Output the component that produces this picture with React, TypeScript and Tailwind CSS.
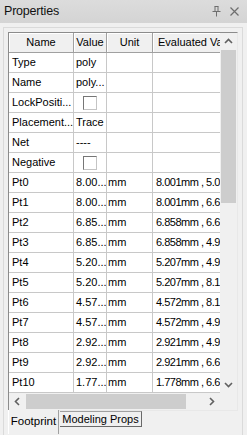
import React from "react";

type Row = { name: string; value?: string; unit?: string; evald?: string; check?: boolean };

const rows: Row[] = [
    { name: "Type", value: "poly" },
    { name: "Name", value: "poly..." },
    { name: "LockPositi...", check: true },
    { name: "Placement...", value: "Trace" },
    { name: "Net", value: "----" },
    { name: "Negative", check: true },
    { name: "Pt0", value: "8.00...", unit: "mm", evald: "8.001mm , 5.0" },
    { name: "Pt1", value: "8.00...", unit: "mm", evald: "8.001mm , 6.6" },
    { name: "Pt2", value: "6.85...", unit: "mm", evald: "6.858mm , 6.6" },
    { name: "Pt3", value: "6.85...", unit: "mm", evald: "6.858mm , 4.9" },
    { name: "Pt4", value: "5.20...", unit: "mm", evald: "5.207mm , 4.9" },
    { name: "Pt5", value: "5.20...", unit: "mm", evald: "5.207mm , 8.1" },
    { name: "Pt6", value: "4.57...", unit: "mm", evald: "4.572mm , 8.1" },
    { name: "Pt7", value: "4.57...", unit: "mm", evald: "4.572mm , 4.9" },
    { name: "Pt8", value: "2.92...", unit: "mm", evald: "2.921mm , 4.9" },
    { name: "Pt9", value: "2.92...", unit: "mm", evald: "2.921mm , 6.6" },
    { name: "Pt10", value: "1.77...", unit: "mm", evald: "1.778mm , 6.6" },
];

function Chevron({ dir }: { dir: "up" | "down" | "left" | "right" }) {
    const pts = {
        up: "1,6 4.5,2.5 8,6",
        down: "1,3 4.5,6.5 8,3",
        left: "6,1 2.5,4.5 6,8",
        right: "3,1 6.5,4.5 3,8",
    }[dir];
    return (
        <svg width="9" height="9" viewBox="0 0 9 9">
            <polyline points={pts} fill="none" stroke="#606060" strokeWidth="1.6" />
        </svg>
    );
}

function HeaderCell({ label, className }: { label: string; className: string }) {
    return (
        <div
            className={`${className} h-[20px] flex items-center justify-center bg-[#f0f0f0] border-r border-b border-[#a0a0a0] shadow-[inset_1px_1px_0_#ffffff] overflow-hidden whitespace-nowrap`}
        >
            {label}
        </div>
    );
}

export default function App() {
    return (
        <div
            className="w-[247px] h-[435px] bg-[#f0f0f0] flex flex-col overflow-hidden text-[11px] text-black"
            style={{ fontFamily: '"Liberation Sans", Arial, sans-serif' }}
        >
            {/* Title bar */}
            <div className="h-[23px] shrink-0 bg-gradient-to-b from-[#dcdcdc] to-[#d4d4d4] flex items-center pl-[4px] pr-[8px]">
                <span className="text-[12.5px] text-[#111111] tracking-[-0.2px]">Properties</span>
                <div className="ml-auto flex items-center gap-[9px]">
                    <svg width="9" height="11" viewBox="0 0 9 11">
                        <path d="M2.5 0.5h4M3 0.5v5M6 0.5v5M0.5 5.5h8M4.5 5.5v5" fill="none" stroke="#6e6e6e" strokeWidth="1" />
                    </svg>
                    <svg width="9" height="9" viewBox="0 0 9 9">
                        <path d="M0.5 0.5l8 8M8.5 0.5l-8 8" fill="none" stroke="#6e6e6e" strokeWidth="1.2" />
                    </svg>
                </div>
            </div>

            {/* Panel body */}
            <div className="flex-1 flex flex-col mt-[4px] ml-[3px] mr-[4px] border-l border-t border-r border-[#dadada] pt-[4px] pl-[4px]">
                <div className="w-[230px] border border-[#8c8c8c] border-r-[#e8e8e8] border-b-[#e8e8e8] flex flex-col bg-white">
                    <div className="flex">
                        <div className="w-[211px] flex flex-col">
                            <div className="flex">
                                <HeaderCell label="Name" className="w-[65px]" />
                                <HeaderCell label="Value" className="w-[33px]" />
                                <HeaderCell label="Unit" className="w-[46px]" />
                                <div className="flex-1 h-[20px] flex items-center pl-[5px] bg-[#f0f0f0] border-b border-[#a0a0a0] shadow-[inset_1px_1px_0_#ffffff] overflow-hidden whitespace-nowrap">
                                    Evaluated Value
                                </div>
                            </div>
                            {rows.map((r) => (
                                <div key={r.name} className="flex h-[20px] border-b border-[#c8c8c8]">
                                    <div className="w-[65px] border-r border-[#c8c8c8] pl-[3px] flex items-center whitespace-nowrap overflow-hidden">
                                        {r.name}
                                    </div>
                                    <div className="w-[33px] border-r border-[#c8c8c8] pl-[2px] flex items-center whitespace-nowrap overflow-hidden">
                                        {r.check ? (
                                            <div className="ml-[7px] w-[14px] h-[14px] bg-white border border-[#767676] border-r-[#c4c4c4] border-b-[#c4c4c4]" />
                                        ) : (
                                            r.value
                                        )}
                                    </div>
                                    <div className="w-[46px] border-r border-[#c8c8c8] pl-[1px] flex items-center whitespace-nowrap overflow-hidden">
                                        {r.unit}
                                    </div>
                                    <div className="flex-1 pl-[3px] flex items-center whitespace-nowrap overflow-hidden tracking-[-0.5px]">
                                        {r.evald}
                                    </div>
                                </div>
                            ))}
                        </div>
                        {/* Vertical scrollbar */}
                        <div className="w-[17px] bg-[#f0f0f0] flex flex-col">
                            <div className="h-[17px] flex items-center justify-center">
                                <Chevron dir="up" />
                            </div>
                            <div className="flex-1 px-[1px]">
                                <div className="h-[153px] bg-[#cdcdcd]" />
                            </div>
                            <div className="h-[17px] flex items-center justify-center">
                                <Chevron dir="down" />
                            </div>
                        </div>
                    </div>
                    {/* Horizontal scrollbar */}
                    <div className="flex h-[17px] bg-[#f0f0f0]">
                        <div className="w-[211px] flex">
                            <div className="w-[17px] flex items-center justify-center">
                                <Chevron dir="left" />
                            </div>
                            <div className="flex-1 py-[1px]">
                                <div className="w-[160px] h-full bg-[#cdcdcd]" />
                            </div>
                            <div className="w-[17px] flex items-center justify-center">
                                <Chevron dir="right" />
                            </div>
                        </div>
                        <div className="w-[17px]" />
                    </div>
                </div>

                {/* Tabs */}
                <div className="flex items-start">
                    <div className="w-[51px] h-[24px] -mt-[1px] bg-[#f0f0f0] border-l border-[#ffffff] border-r border-r-[#a0a0a0] flex items-center justify-center text-[11.5px]">
                        Footprint
                    </div>
                    <div className="w-[82px] h-[16px] ml-[1px] bg-[#f0f0f0] border-r border-b border-[#696969] border-t border-t-[#a0a0a0] flex items-center justify-center whitespace-nowrap">
                        Modeling Props
                    </div>
                </div>
            </div>
        </div>
    );
}
